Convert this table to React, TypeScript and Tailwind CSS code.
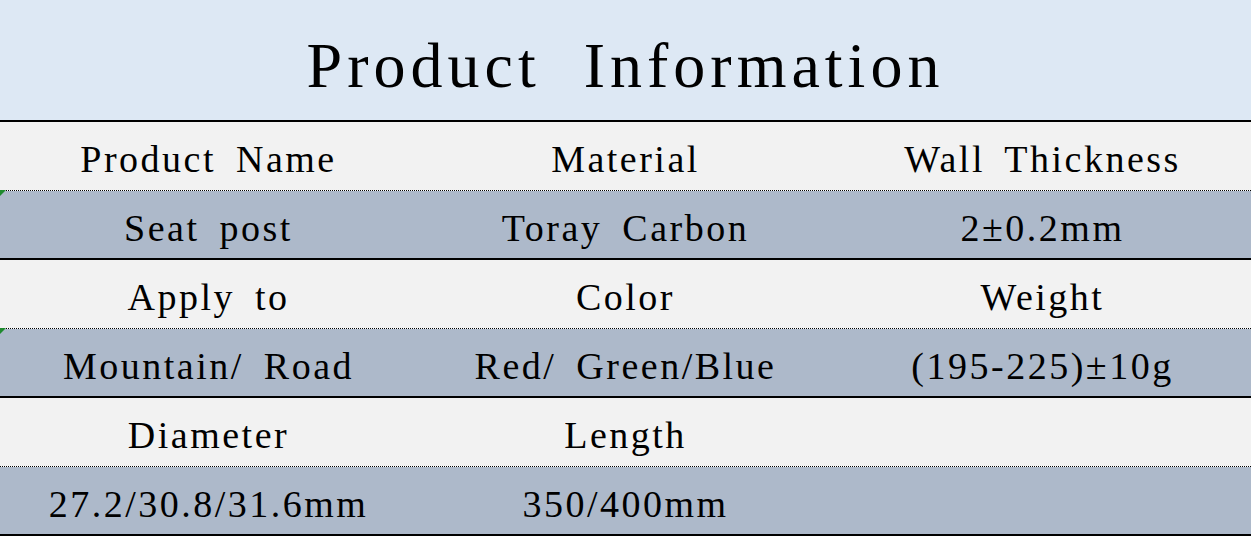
import React from 'react';

const rows: { labels: string[]; values: string[] }[] = [
  { labels: ['Product Name', 'Material', 'Wall Thickness'], values: ['Seat post', 'Toray Carbon', '2±0.2mm'] },
  { labels: ['Apply to', 'Color', 'Weight'], values: ['Mountain/ Road', 'Red/ Green/Blue', '(195-225)±10g'] },
  { labels: ['Diameter', 'Length', ''], values: ['27.2/30.8/31.6mm', '350/400mm', ''] },
];

const Corner = () => (
  <svg className="absolute left-0 -top-[1px] w-[6px] h-[6px]" viewBox="0 0 6 6">
    <polygon points="0,0 6,0 0,6" fill="#1f8a2e" />
  </svg>
);

const Cell = ({ text }: { text: string }) => (
  <div className="flex items-center justify-center text-[38px] leading-none tracking-[2.5px] [word-spacing:8px] text-black">
    {text}
  </div>
);

const App = () => {
  return (
    <div className="w-[1254px] h-[539px] bg-white overflow-hidden font-['Liberation_Serif',serif]">
      <div className="w-[1251px]">
        {/* Title */}
        <div className="h-[120px] bg-[#dde8f4] flex items-center justify-center pt-[12px]">
          <h1 className="text-[64px] leading-none tracking-[5px] [word-spacing:22px] text-black">
            Product Information
          </h1>
        </div>

        {rows.map((row, i) => (
          <div key={i}>
            <div className="h-[2px] bg-black" />
            <div className="h-[68px] bg-[#f2f2f2] grid grid-cols-3 pt-[6px]">
              {row.labels.map((t, j) => (
                <Cell key={j} text={t} />
              ))}
            </div>
            <div className="relative h-0 border-t border-dotted border-black" />
            <div className="relative h-[67px] bg-[#adb9ca] grid grid-cols-3 pt-[6px]">
              {i < 2 && <Corner />}
              {row.values.map((t, j) => (
                <Cell key={j} text={t} />
              ))}
            </div>
          </div>
        ))}
        <div className="h-[2px] bg-black" />
      </div>
    </div>
  );
};

export default App;
